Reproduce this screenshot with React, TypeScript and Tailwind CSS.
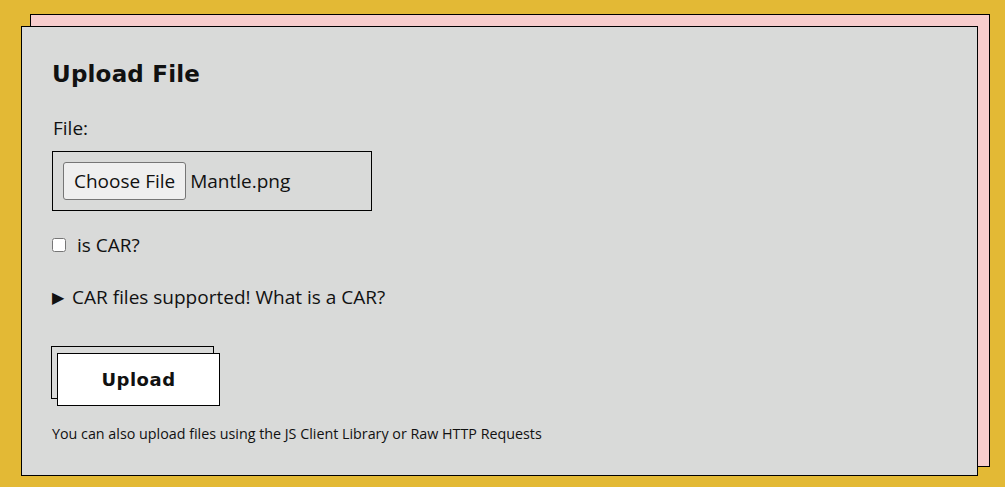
export default function App() {
  return (
    <div className="relative w-[1005px] h-[487px] bg-[#e3b935] pt-[26px] pl-[21px] font-['Open_Sans',sans-serif] text-[#111]">
      <div className="absolute left-[30px] top-[14px] w-[960px] h-[453px] border border-black bg-[#f7cdcd]"></div>
      <div className="relative w-[957px] h-[450px] border border-black bg-[#d9dad9] pl-[30px] pt-[33px]">
        <h1 className="font-['DejaVu_Sans',sans-serif] font-bold text-[23px] leading-[28px] tracking-[0.2px]">Upload File</h1>
        <div className="mt-[27px] text-[19px] leading-[26px] pl-px">File:</div>
        <div className="mt-[10px] w-[320px] h-[60px] border border-black p-[10px] flex items-center gap-[4px]">
          <button className="h-[38px] px-[10px] bg-[#efefef] border border-[#767676] rounded-[3px] text-[19px] leading-none">Choose File</button>
          <span className="text-[19px]">Mantle.png</span>
        </div>
        <label className="mt-[21px] flex items-center gap-[11px] text-[19px] leading-[26px]">
          <input type="checkbox" className="w-[14px] h-[14px] m-0" />
          <span>is CAR?</span>
        </label>
        <div className="mt-[26px] flex items-center gap-[8px] text-[19px] leading-[26px]">
          <span className="text-[16px] leading-none">▶</span>
          <span>CAR files supported! What is a CAR?</span>
        </div>
        <div className="mt-[36px] -ml-px relative w-[163px] h-[53px] border border-black bg-[#d9dad9]">
          <div className="absolute left-[5px] top-[6px] w-[163px] h-[53px] border border-black bg-white flex items-center justify-center font-['DejaVu_Sans',sans-serif] font-bold text-[18px] tracking-[0.5px]">
            Upload
          </div>
        </div>
        <p className="mt-[25px] text-[14.3px] leading-[20px]">You can also upload files using the JS Client Library or Raw HTTP Requests</p>
      </div>
    </div>
  );
}
